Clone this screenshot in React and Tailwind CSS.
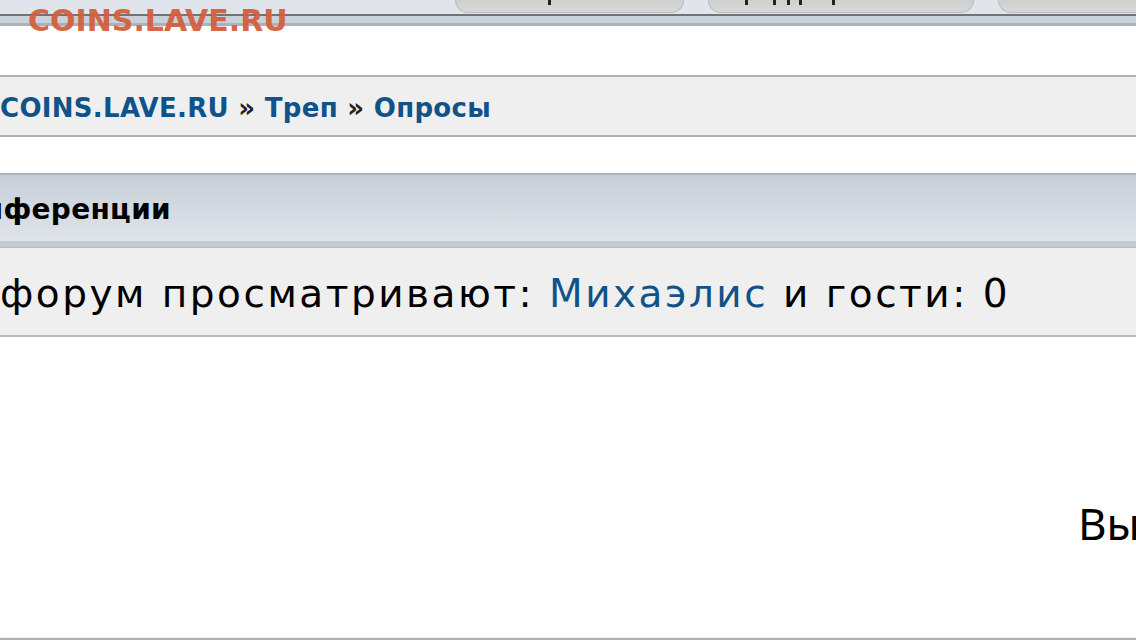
import React from "react";

const Tab = ({ className, marks }) => (
  <div
    className={
      "relative shrink-0 h-[13px] rounded-b-[16px] border-x border-b border-[#b4bcc5] bg-gradient-to-b from-[#cfcfcf] to-[#d8d8d8] " +
      className
    }
  >
    {marks.map((m, i) => (
      <span
        key={i}
        className="absolute top-0 w-[3px] h-[5px] bg-[#222]"
        style={{ left: m }}
      />
    ))}
  </div>
);

const App = () => {
  return (
    <div className="relative w-[1136px] h-[640px] overflow-hidden bg-white font-['DejaVu_Sans',Verdana,sans-serif]">
      {/* top header with tabs */}
      <div className="flex h-[14px] bg-[#dfe5ea] overflow-hidden">
        <Tab className="ml-[455px] w-[229px]" marks={[92]} />
        <Tab className="ml-[24px] w-[266px]" marks={[36, 64, 78, 90, 123]} />
        <Tab className="ml-[24px] w-[160px]" marks={[152]} />
      </div>
      <div className="h-[2px] bg-[#737373]" />
      <div className="h-[7px] bg-[#c9d1da]" />
      <div className="h-[3px] bg-[#aab2bb]" />
      <div className="absolute left-[28px] top-[4px] text-[30px] leading-[34px] font-bold text-[#d2603f] opacity-95">
        COINS.LAVE.RU
      </div>

      <div className="h-[49px]" />

      {/* breadcrumbs */}
      <div className="h-[62px] pt-[4px] border-y-2 border-[#aab2bc] bg-[#efefef] flex items-center whitespace-nowrap">
        <span className="text-[26px] tracking-[0.3px] font-bold text-[#105289]">
          COINS.LAVE.RU <span className="text-[#222]">»</span> Треп{" "}
          <span className="text-[#222]">»</span> Опросы
        </span>
      </div>

      <div className="h-[36px]" />

      {/* who is online header */}
      <div className="border-t-2 border-[#aab4be]">
        <div className="h-[66px] pt-[4px] bg-gradient-to-b from-[#c7cfd8] to-[#dfe4e9] overflow-hidden">
          <div className="w-[171px] h-full flex items-center justify-end whitespace-nowrap">
            <span className="text-[28px] tracking-[0.3px] font-bold text-black">
              Кто сейчас на конференции
            </span>
          </div>
        </div>
        <div className="h-[6px] bg-[#c3cbd3]" />
      </div>

      {/* online row */}
      <div className="h-[90px] pt-[6px] border-t border-b-2 border-[#b3bbc3] bg-[#efefef] overflow-hidden">
        <div className="w-[1010px] h-full flex items-center justify-end whitespace-nowrap">
          <span className="text-[39px] tracking-[2.5px] text-black">
            Сейчас этот форум просматривают:{" "}
            <span className="text-[#105289]">Михаэлис</span> и гости: 0
          </span>
        </div>
      </div>

      <div className="h-[160px]" />
      <div className="whitespace-nowrap overflow-hidden">
        <span className="ml-[1078px] text-[44px] leading-[52px] text-black font-['Noto_Sans',sans-serif]">
          Вы не можете начинать темы
        </span>
      </div>

      <div className="absolute bottom-0 left-0 right-0 h-[3px] border-t border-[#f2f2f2] bg-[#b0b0b0]" />
    </div>
  );
};

export default App;
